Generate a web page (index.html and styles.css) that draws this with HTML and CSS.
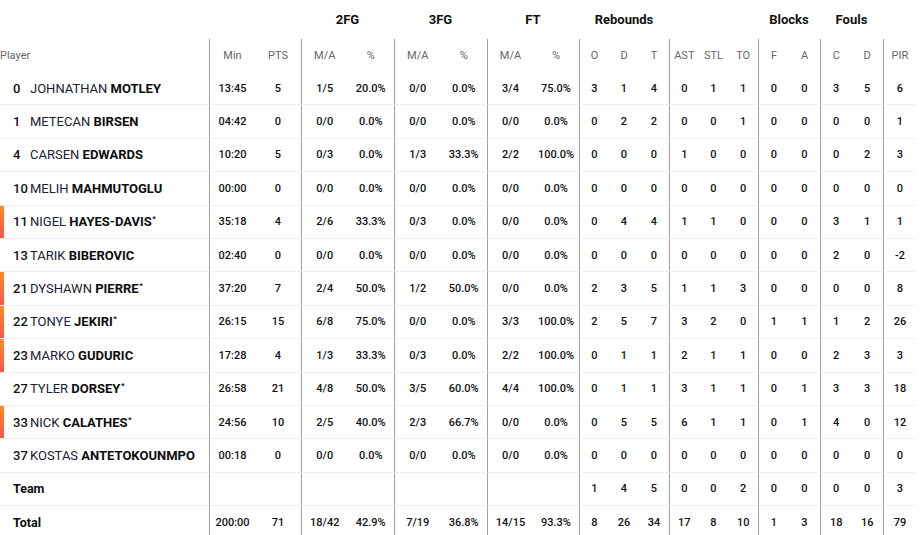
FILE: index.html
```html
<!DOCTYPE html>
<html lang="en">
<head>
<meta charset="utf-8">
<title>Box score</title>
<link rel="stylesheet" href="styles.css">
</head>
<body>
<table class="box">
  <thead>
    <tr class="groups">
      <th class="gh span3"></th>
      <th class="gh span2">2FG</th>
      <th class="gh span2">3FG</th>
      <th class="gh span2">FT</th>
      <th class="gh span3">Rebounds</th>
      <th class="gh span3"></th>
      <th class="gh span2">Blocks</th>
      <th class="gh span2">Fouls</th>
      <th class="gh"></th>
    </tr>
    <tr class="labels">
      <th class="player lbl">Player</th>
      <th class="lbl g">Min</th><th class="lbl e">PTS</th>
      <th class="lbl g">M/A</th><th class="lbl e">%</th>
      <th class="lbl g">M/A</th><th class="lbl e">%</th>
      <th class="lbl g">M/A</th><th class="lbl e">%</th>
      <th class="lbl g3">O</th><th class="lbl">D</th><th class="lbl e3">T</th>
      <th class="lbl g3">AST</th><th class="lbl">STL</th><th class="lbl e3">TO</th>
      <th class="lbl g">F</th><th class="lbl e">A</th>
      <th class="lbl g">C</th><th class="lbl e">D</th>
      <th class="lbl pir">PIR</th>
    </tr>
  </thead>
  <tbody id="rows"></tbody>
</table>
<script src="app.js"></script>
</body>
</html>
```

FILE: styles.css
```css
html, body {
  margin: 0;
  padding: 0;
  background: #ffffff;
}

body {
  font-family: Roboto, "Noto Sans", Arial, sans-serif;
  color: #141414;
}

.box {
  display: grid;
  grid-template-columns:
    209px 46px 46px
    46.5px 46.5px 46.5px 46.5px
    46px 46px
    30px 30px 30px
    29.67px 29.67px 29.66px
    31px 31px 31.5px 31.5px 33px;
  grid-template-rows: 39px 33px;
  grid-auto-rows: 33.4px;
  width: 916px;
  border-spacing: 0;
}

.box thead,
.box tbody,
.box tr {
  display: contents;
}

.box th,
.box td {
  display: flex;
  align-items: center;
  justify-content: center;
  box-sizing: border-box;
  padding: 0;
  margin: 0;
  white-space: nowrap;
  min-width: 0;
}

.gh {
  font-size: 13px;
  font-weight: 700;
  color: #111;
}

.span2 { grid-column: span 2; }
.span3 { grid-column: span 3; }

.lbl {
  font-size: 11px;
  font-weight: 400;
  color: #666666;
}

.box td {
  font-size: 11px;
  font-weight: 500;
  color: #111111;
  border-bottom: 1px solid #efefef;
}

.g,
.g3,
.pir {
  border-left: 1px solid #a0a0a0;
}

.g { padding-left: 5px; }
.e { padding-right: 3px; }
.g3 { padding-left: 6.5px; }
.e3 { padding-right: 5px; }
.pir { padding-left: 3.5px; }

.box .player {
  justify-content: flex-start;
}

.labels .player {
  padding-left: 0;
}

.box td.player {
  padding-left: 13px;
  font-size: 13px;
}

.box td.starter {
  background-image: linear-gradient(180deg, #ff8b29 0%, #f5594f 100%);
  background-repeat: no-repeat;
  background-size: 4px 100%;
  background-position: left top;
  background-clip: padding-box;
}

.num {
  display: inline-block;
  width: 17px;
  font-weight: 500;
  color: #111111;
}

.first {
  font-weight: 400;
  color: #20202e;
}

.last {
  font-weight: 700;
  color: #0d0d0d;
}

.star {
  font-size: 8px;
  font-weight: 700;
  vertical-align: 5px;
  margin-left: 0.5px;
}

.box td.sum {
  font-weight: 700;
  font-size: 12.5px;
  color: #0d0d0d;
}
```

FILE: app.js
```js
var players = [
  ["0", "JOHNATHAN", "MOTLEY", 0, 0, "13:45", "5", "1/5", "20.0%", "0/0", "0.0%", "3/4", "75.0%", "3", "1", "4", "0", "1", "1", "0", "0", "3", "5", "6"],
  ["1", "METECAN", "BIRSEN", 0, 0, "04:42", "0", "0/0", "0.0%", "0/0", "0.0%", "0/0", "0.0%", "0", "2", "2", "0", "0", "1", "0", "0", "0", "0", "1"],
  ["4", "CARSEN", "EDWARDS", 0, 0, "10:20", "5", "0/3", "0.0%", "1/3", "33.3%", "2/2", "100.0%", "0", "0", "0", "1", "0", "0", "0", "0", "0", "2", "3"],
  ["10", "MELIH", "MAHMUTOGLU", 0, 0, "00:00", "0", "0/0", "0.0%", "0/0", "0.0%", "0/0", "0.0%", "0", "0", "0", "0", "0", "0", "0", "0", "0", "0", "0"],
  ["11", "NIGEL", "HAYES-DAVIS", 1, 1, "35:18", "4", "2/6", "33.3%", "0/3", "0.0%", "0/0", "0.0%", "0", "4", "4", "1", "1", "0", "0", "0", "3", "1", "1"],
  ["13", "TARIK", "BIBEROVIC", 0, 0, "02:40", "0", "0/0", "0.0%", "0/0", "0.0%", "0/0", "0.0%", "0", "0", "0", "0", "0", "0", "0", "0", "2", "0", "-2"],
  ["21", "DYSHAWN", "PIERRE", 1, 1, "37:20", "7", "2/4", "50.0%", "1/2", "50.0%", "0/0", "0.0%", "2", "3", "5", "1", "1", "3", "0", "0", "0", "0", "8"],
  ["22", "TONYE", "JEKIRI", 1, 1, "26:15", "15", "6/8", "75.0%", "0/0", "0.0%", "3/3", "100.0%", "2", "5", "7", "3", "2", "0", "1", "1", "1", "2", "26"],
  ["23", "MARKO", "GUDURIC", 0, 1, "17:28", "4", "1/3", "33.3%", "0/3", "0.0%", "2/2", "100.0%", "0", "1", "1", "2", "1", "1", "0", "0", "2", "3", "3"],
  ["27", "TYLER", "DORSEY", 1, 0, "26:58", "21", "4/8", "50.0%", "3/5", "60.0%", "4/4", "100.0%", "0", "1", "1", "3", "1", "1", "0", "1", "3", "3", "18"],
  ["33", "NICK", "CALATHES", 1, 1, "24:56", "10", "2/5", "40.0%", "2/3", "66.7%", "0/0", "0.0%", "0", "5", "5", "6", "1", "1", "0", "1", "4", "0", "12"],
  ["37", "KOSTAS", "ANTETOKOUNMPO", 0, 0, "00:18", "0", "0/0", "0.0%", "0/0", "0.0%", "0/0", "0.0%", "0", "0", "0", "0", "0", "0", "0", "0", "0", "0", "0"]
];

var extra = [
  ["Team", "", "", "", "", "", "", "", "", "1", "4", "5", "0", "0", "2", "0", "0", "0", "0", "3"],
  ["Total", "200:00", "71", "18/42", "42.9%", "7/19", "36.8%", "14/15", "93.3%", "8", "26", "34", "17", "8", "10", "1", "3", "18", "16", "79"]
];

var colClass = ["g", "e", "g", "e", "g", "e", "g", "e", "g3", "", "e3", "g3", "", "e3", "g", "e", "g", "e", "pir"];

function statCells(values) {
  var html = "";
  for (var i = 0; i < values.length; i++) {
    html += '<td class="' + colClass[i] + '">' + values[i] + "</td>";
  }
  return html;
}

var out = "";
players.forEach(function (p) {
  var cls = "player" + (p[4] ? " starter" : "");
  out += "<tr>";
  out += '<td class="' + cls + '"><span class="num">' + p[0] + '</span><span class="name"><span class="first">' + p[1] + '</span> <span class="last">' + p[2] + "</span>" + (p[3] ? '<span class="star">*</span>' : "") + "</span></td>";
  out += statCells(p.slice(5));
  out += "</tr>";
});
extra.forEach(function (r) {
  out += '<tr><td class="player sum">' + r[0] + "</td>" + statCells(r.slice(1)) + "</tr>";
});
document.getElementById("rows").innerHTML = out;
```
